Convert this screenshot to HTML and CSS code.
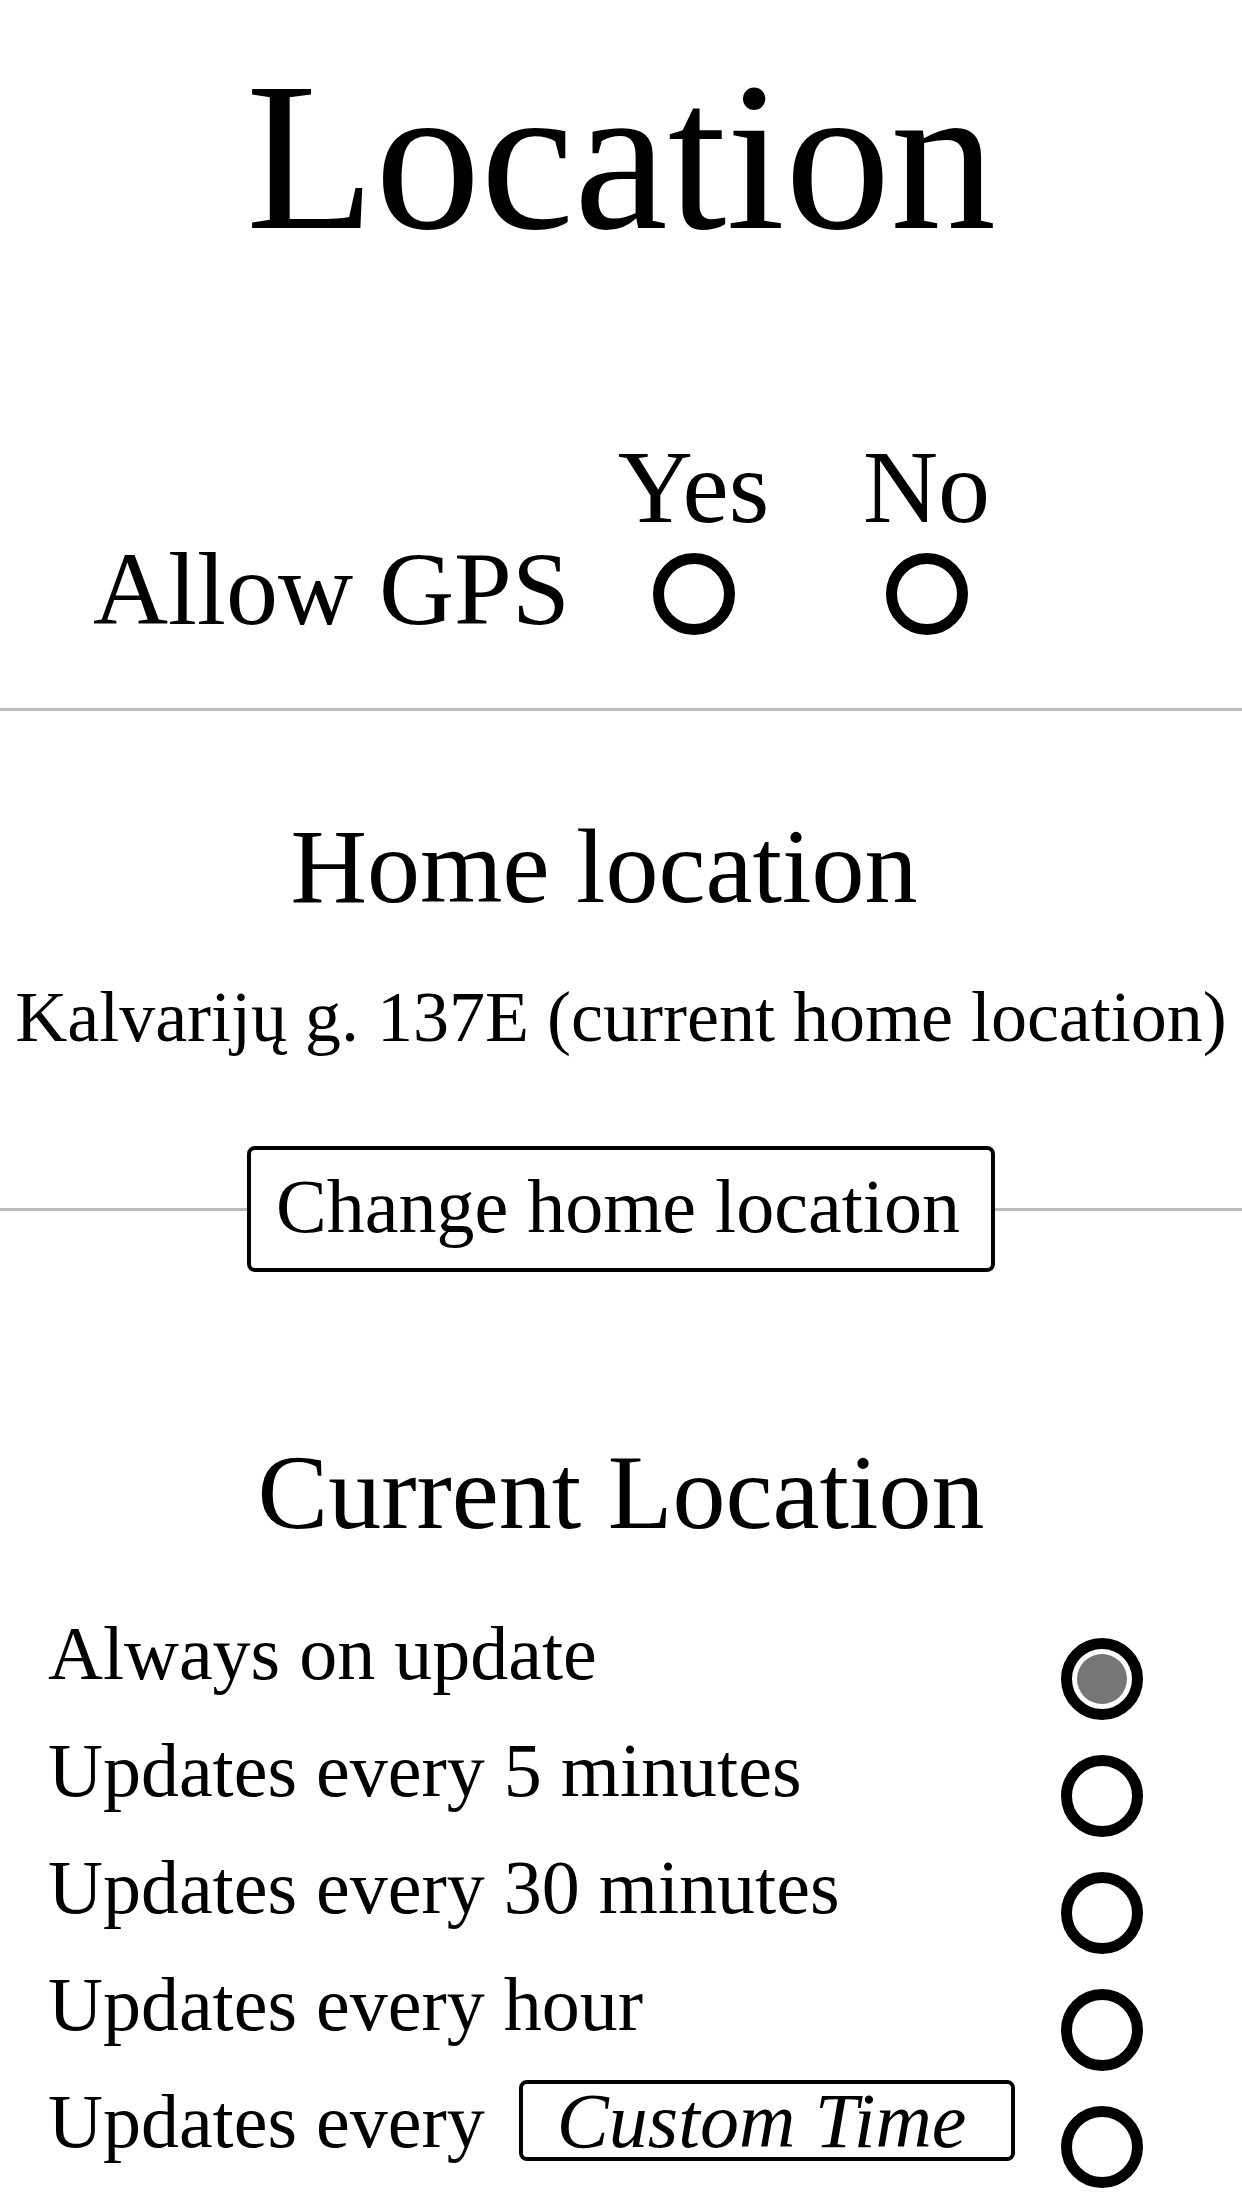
FILE: index.html
```html
<!DOCTYPE html>
<html lang="en">
<head>
<meta charset="utf-8">
<title>Location</title>
<link rel="stylesheet" href="styles.css">
</head>
<body>
<h1 class="title">Location</h1>

<div class="gps">
  <div class="gps-cell"></div>
  <div class="gps-head">Yes</div>
  <div class="gps-head">No</div>
  <div class="gps-label">Allow GPS</div>
  <div class="gps-radio"><input class="radio" type="radio" name="gps" aria-label="Yes"></div>
  <div class="gps-radio"><input class="radio" type="radio" name="gps" aria-label="No"></div>
</div>

<div class="divider"></div>

<h2 class="section-title home-title">Home location</h2>
<p class="address">Kalvarijų g. 137E (current home location)</p>

<div class="change-row">
  <button class="btn" type="button">Change home location</button>
</div>

<h2 class="section-title current-title">Current Location</h2>

<div class="options">
  <label class="option">
    <span class="option-label">Always on update</span>
    <input class="radio" type="radio" name="upd" checked>
  </label>
  <label class="option">
    <span class="option-label">Updates every 5 minutes</span>
    <input class="radio" type="radio" name="upd">
  </label>
  <label class="option">
    <span class="option-label">Updates every 30 minutes</span>
    <input class="radio" type="radio" name="upd">
  </label>
  <label class="option">
    <span class="option-label">Updates every hour</span>
    <input class="radio" type="radio" name="upd">
  </label>
  <label class="option">
    <span class="option-label custom-label"><span>Updates every</span><span class="custom">Custom Time</span></span>
    <input class="radio" type="radio" name="upd">
  </label>
</div>
</body>
</html>
```
FILE: styles.css
```css
html, body {
  margin: 0;
  padding: 0;
  background: #fff;
}

body {
  font-family: "Liberation Serif", "Times New Roman", serif;
  color: #000;
}

.title {
  margin: 37px 0 0;
  font-size: 211px;
  line-height: 240px;
  font-weight: normal;
  text-align: center;
}

.gps {
  display: grid;
  grid-template-columns: 484px 233px 233px;
  padding-left: 93px;
  margin-top: 159px;
  font-size: 104px;
  line-height: 102px;
}

.gps-head {
  text-align: center;
}

.gps-label {
  white-space: nowrap;
}

.gps-radio {
  display: flex;
  justify-content: center;
  align-items: flex-start;
}

.gps-radio .radio {
  margin-top: 15px;
}

.radio {
  appearance: none;
  -webkit-appearance: none;
  box-sizing: border-box;
  width: 82px;
  height: 82px;
  margin: 0;
  border: 11px solid #000;
  border-radius: 50%;
  background: #fff;
  padding: 5px;
}

.radio:checked {
  background: #767676 content-box;
}

.divider {
  height: 3px;
  background: #bcbcbc;
  margin-top: 68px;
}

.section-title {
  margin: 0;
  font-size: 106px;
  line-height: 120px;
  font-weight: normal;
  text-align: center;
}

.home-title {
  margin-top: 96px;
  padding-right: 34px;
}

.address {
  margin: 45px 0 0;
  font-size: 72px;
  line-height: 90px;
  text-align: center;
  white-space: nowrap;
}

.change-row {
  margin-top: 84px;
  display: flex;
  justify-content: center;
  background: linear-gradient(#bcbcbc, #bcbcbc) center / 100% 3px no-repeat;
}

.btn {
  box-sizing: border-box;
  height: 126px;
  border: 4px solid #000;
  border-radius: 8px;
  background: #fff;
  color: #000;
  font-family: inherit;
  font-size: 76px;
  line-height: 112px;
  padding: 0 31px 6px 25px;
  margin: 0;
}

.current-title {
  margin-top: 161px;
}

.options {
  margin-top: 42px;
  padding: 0 99px 20px 48px;
}

.option {
  display: flex;
  justify-content: space-between;
  align-items: flex-start;
  font-size: 76px;
  line-height: 117px;
}

.option .radio {
  flex: none;
  margin: 43px 0 -8px;
}

.option-label {
  white-space: nowrap;
}

.custom-label {
  display: flex;
  align-items: baseline;
  gap: 34px;
}

.custom {
  box-sizing: border-box;
  width: 496px;
  height: 81px;
  border: 4px solid #000;
  border-radius: 8px;
  padding-left: 34px;
  font-size: 78px;
  font-style: italic;
  line-height: 73px;
}
```
